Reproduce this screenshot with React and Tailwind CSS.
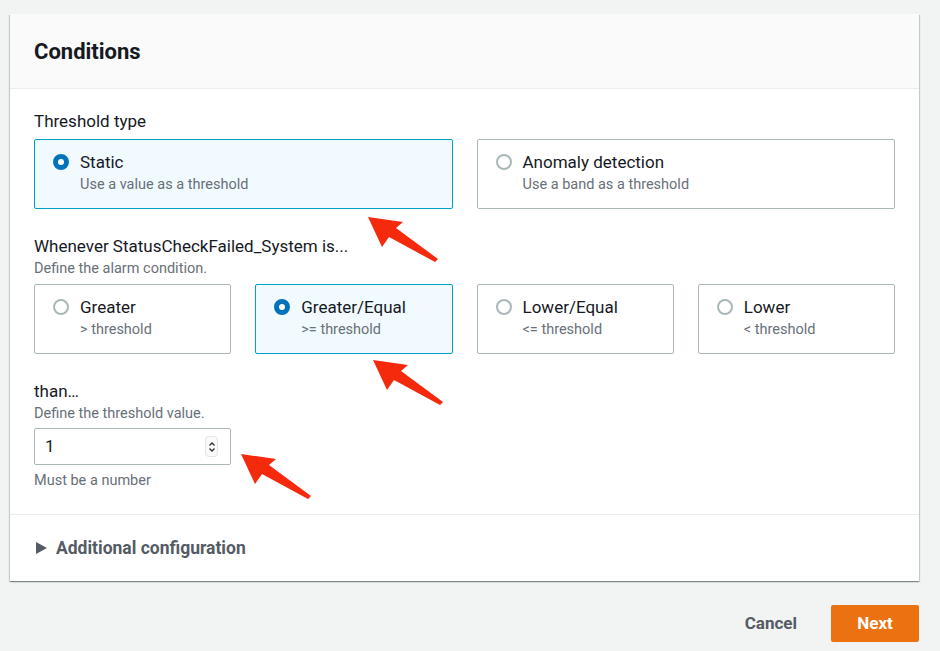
import React from "react";

function Radio({ checked }) {
  return checked ? (
    <span className="box-border block h-[16px] w-[16px] shrink-0 rounded-full border-[5px] border-[#0073bb] bg-white" />
  ) : (
    <span className="box-border block h-[16px] w-[16px] shrink-0 rounded-full border-2 border-[#aab7b8] bg-white" />
  );
}

function Tile({ checked, title, desc }) {
  return (
    <div
      className={
        "flex h-[70px] items-start gap-[11px] rounded-[2px] border pl-[18px] pt-[11px] " +
        (checked ? "border-[#00a1c9] bg-[#f1faff]" : "border-[#aab7b8] bg-white")
      }
    >
      <div className="flex h-[22px] items-center">
        <Radio checked={checked} />
      </div>
      <div className="flex flex-col">
        <span className="text-[17px] leading-[22px] text-[#16191f]">{title}</span>
        <span className="mt-[1px] text-[14.5px] leading-[22px] text-[#687078]">{desc}</span>
      </div>
    </div>
  );
}

function Arrow({ className }) {
  return (
    <svg className={"pointer-events-none absolute " + className} width="76" height="50" viewBox="0 0 76 50">
      <polygon points="1,1 36,6 29,12 71,43 68,46 22,21 15,31" fill="#f52a0d" />
    </svg>
  );
}

export default function App() {
  return (
    <div
      className="relative min-h-[651px] w-[940px] bg-[#f2f3f3] pl-[10px] pt-[14px]"
      style={{ fontFamily: "Roboto, 'Liberation Sans', sans-serif" }}
    >
      <div className="w-[909px] bg-white shadow-[0_1px_1px_0_rgba(0,28,36,0.3),1px_1px_1px_0_rgba(0,28,36,0.15),-1px_1px_1px_0_rgba(0,28,36,0.15)]">
        <div className="flex h-[75px] items-center border-b border-[#eaeded] bg-[#fafafa] px-[24px]">
          <h2 className="text-[22px] font-bold text-[#16191f]">Conditions</h2>
        </div>
        <div className="border-b border-[#eaeded] px-[24px] pb-[23px] pt-[21px]">
          <div className="text-[17px] leading-[22px] text-[#16191f]">Threshold type</div>
          <div className="mt-[7px] grid grid-cols-2 gap-[24px]">
            <Tile checked title="Static" desc="Use a value as a threshold" />
            <Tile title="Anomaly detection" desc="Use a band as a threshold" />
          </div>

          <div className="mt-[26px] text-[17px] leading-[22px] text-[#16191f]">
            Whenever StatusCheckFailed_System is...
          </div>
          <div className="mt-[1px] text-[14.5px] leading-[22px] text-[#687078]">Define the alarm condition.</div>
          <div className="mt-[4px] grid grid-cols-4 gap-[24px]">
            <Tile title="Greater" desc="> threshold" />
            <Tile checked title="Greater/Equal" desc=">= threshold" />
            <Tile title="Lower/Equal" desc="<= threshold" />
            <Tile title="Lower" desc="< threshold" />
          </div>

          <div className="mt-[26px] text-[17px] leading-[22px] text-[#16191f]">than…</div>
          <div className="mt-[1px] text-[14.5px] leading-[22px] text-[#687078]">Define the threshold value.</div>
          <div className="mt-[3px] flex h-[37px] w-[197px] items-center justify-between rounded-[2px] border border-[#aab7b8] pl-[10px] pr-[12px]">
            <span className="text-[17px] text-[#16191f]">1</span>
            <span className="flex h-[21px] w-[13px] flex-col items-center justify-center rounded-[4px] border border-[#e3e6e6] bg-[#fafafa]">
              <svg width="8" height="6" viewBox="0 0 8 6">
                <path d="M1.5 4.5 L4 2 L6.5 4.5" fill="none" stroke="#333" strokeWidth="1.3" />
              </svg>
              <svg width="8" height="6" viewBox="0 0 8 6">
                <path d="M1.5 1.5 L4 4 L6.5 1.5" fill="none" stroke="#333" strokeWidth="1.3" />
              </svg>
            </span>
          </div>
          <div className="mt-[6px] text-[14.5px] leading-[20px] text-[#687078]">Must be a number</div>
        </div>
        <div className="flex h-[66px] items-center gap-[9px] px-[26px]">
          <svg width="11" height="12" viewBox="0 0 11 12">
            <polygon points="0,0 11,6 0,12" fill="#545b64" />
          </svg>
          <span className="text-[17.5px] font-bold text-[#545b64]">Additional configuration</span>
        </div>
      </div>

      <div className="mt-[24px] flex w-[909px] items-center justify-end gap-[34px]">
        <button className="text-[17px] font-bold text-[#545b64]">Cancel</button>
        <button className="h-[37px] w-[88px] rounded-[2px] bg-[#ec7211] text-[17px] font-bold text-white">Next</button>
      </div>

      <Arrow className="left-[367px] top-[216px]" />
      <Arrow className="left-[372px] top-[359px]" />
      <Arrow className="left-[240px] top-[453px]" />
    </div>
  );
}
